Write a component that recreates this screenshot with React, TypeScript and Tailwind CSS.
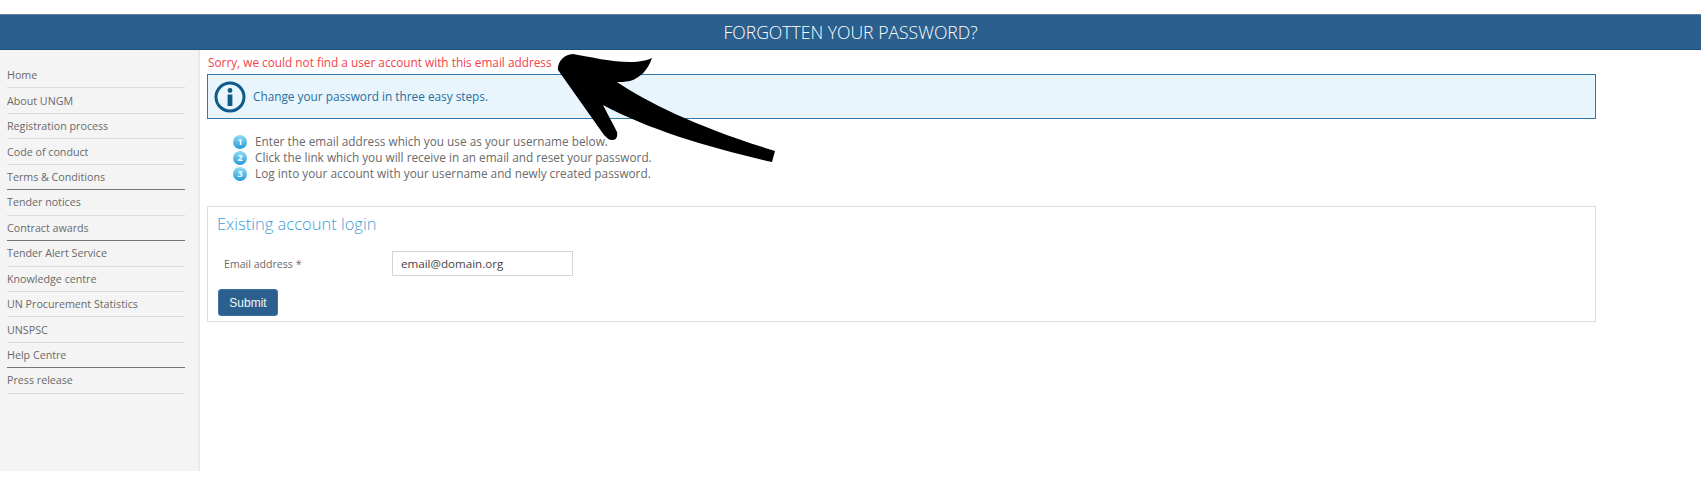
const navItems = [
  { label: "Home" },
  { label: "About UNGM" },
  { label: "Registration process" },
  { label: "Code of conduct" },
  { label: "Terms & Conditions", dark: true },
  { label: "Tender notices" },
  { label: "Contract awards", dark: true },
  { label: "Tender Alert Service" },
  { label: "Knowledge centre" },
  { label: "UN Procurement Statistics" },
  { label: "UNSPSC" },
  { label: "Help Centre", dark: true },
  { label: "Press release" },
];

const steps = [
  "Enter the email address which you use as your username below.",
  "Click the link which you will receive in an email and reset your password.",
  "Log into your account with your username and newly created password.",
];

const InfoIcon = () => (
  <svg width="32" height="32" viewBox="0 0 32 32" className="shrink-0">
    <circle cx="16" cy="16" r="14" fill="none" stroke="#0f5a88" strokeWidth="3" />
    <circle cx="16" cy="9.5" r="2.4" fill="#0f5a88" />
    <rect x="13.6" y="13.5" width="4.8" height="11.5" fill="#0f5a88" />
  </svg>
);

const Arrow = () => (
  <svg
    className="absolute top-0 left-0 pointer-events-none"
    width="800"
    height="200"
    viewBox="0 0 800 200"
  >
    <path
      d="M573 54 C 590 57 612 62 630 62 C 640 62 648 60 652 58 C 648 70 640 78 630 81 C 625 82 620 82 617 82 C 650 104 700 128 775 151 L 772 162 C 710 148 650 130 603 105 C 608 115 613 124 617 132 C 618 137 616 140 612 140 C 609 140 607 138 604 135 L 558 70 C 557 64 563 54 573 54 Z"
      fill="#000"
    />
  </svg>
);

export default function App() {
  return (
    <div className="relative h-[498px] w-[1701px] overflow-hidden bg-white font-['Open_Sans',sans-serif] text-[#555]">
      <div className="pt-[14px]">
        <header className="flex h-[36px] items-center justify-center border-t border-b border-t-[#5d82a3] border-b-[#1f4f7a] bg-[#2a5f8e]">
          <h1 className="text-[17.6px] font-light text-white">FORGOTTEN YOUR PASSWORD?</h1>
        </header>
      </div>

      <div className="flex h-[421px]">
        <aside className="w-[200px] shrink-0 border-r-2 border-[#e9e9e9] bg-[#f4f4f4] pt-[13px] pr-[13px] pl-[7px]">
          <ul>
            {navItems.map((item) => (
              <li
                key={item.label}
                className={
                  item.dark
                    ? "flex h-[25.45px] items-center border-b border-[#777] text-[10.7px] text-[#6a6a6a]"
                    : "flex h-[25.45px] items-center border-b border-[#dcdcdc] text-[10.7px] text-[#6a6a6a]"
                }
              >
                {item.label}
              </li>
            ))}
          </ul>
        </aside>

        <main className="w-[1396px] pl-[7px]">
          <p className="mt-[3px] ml-[1px] h-[21px] text-[11.8px] leading-[18px] text-[#f5414a]">
            Sorry, we could not find a user account with this email address
          </p>

          <div className="flex h-[45px] items-center gap-[7px] border border-[#2f76ab] bg-[#e8f5fd] pl-[6px]">
            <InfoIcon />
            <span className="text-[11.8px] text-[#2a6f9e]">Change your password in three easy steps.</span>
          </div>

          <ol className="mt-[15px] ml-[26px]">
            {steps.map((step, i) => (
              <li key={step} className="flex h-[16px] items-center gap-[8px] text-[11.8px] text-[#6a6a6a]">
                <span className="flex h-[14px] w-[14px] items-center justify-center rounded-full bg-gradient-to-b from-[#8fdcf5] to-[#1c9ad8] text-[9px] font-bold text-white">
                  {i + 1}
                </span>
                {step}
              </li>
            ))}
          </ol>

          <section className="mt-[24px] h-[116px] border border-[#dedede] pt-[7px] pl-[9px]">
            <h2 className="text-[16.5px] leading-[20px] font-light text-[#3d9fd8]">Existing account login</h2>
            <div className="mt-[16px] flex h-[26px] items-center pl-[7px]">
              <label className="w-[168px] pt-[3px] text-[10.6px] text-[#6a6a6a]">Email address *</label>
              <input
                readOnly
                value="email@domain.org"
                className="h-[25px] w-[181px] border border-[#d5d5d5] bg-white px-[8px] text-[11.6px] text-[#444] outline-none"
              />
            </div>
            <button className="mt-[13px] ml-[1px] flex h-[27px] w-[60px] items-center justify-center rounded-[3px] border border-[#3a74a5] bg-[#2a5f8e] font-['Liberation_Sans',sans-serif] text-[12px] text-[#f2f6f9]">
              Submit
            </button>
          </section>
        </main>
      </div>

      <Arrow />
    </div>
  );
}
